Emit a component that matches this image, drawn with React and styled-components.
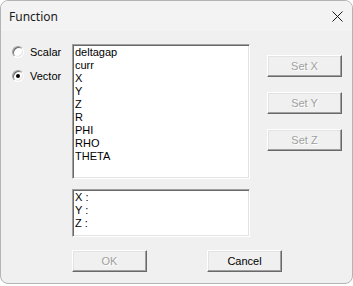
import React from 'react';
import styled, { createGlobalStyle } from 'styled-components';

const GlobalStyle = createGlobalStyle`
  * { box-sizing: border-box; }
  html, body {
    margin: 0;
    padding: 0;
    background: #ffffff;
  }
`;

const Window = styled.div`
  width: 353px;
  height: 284px;
  display: flex;
  flex-direction: column;
  border: 1px solid #b4b4b4;
  border-radius: 8px;
  overflow: hidden;
  background: #f0f0f0;
`;

const TitleBar = styled.div`
  height: 30px;
  flex: none;
  display: flex;
  align-items: center;
  justify-content: space-between;
  padding: 0 9px 0 8px;
  background: #f3f3f3;
  font-family: 'Noto Sans', 'Open Sans', sans-serif;
  font-size: 12px;
  color: #1a1a1a;
`;

const CloseButton = styled.div`
  width: 12px;
  height: 12px;
  display: flex;
  align-items: center;
  justify-content: center;
`;

const Body = styled.div`
  flex: 1;
  display: flex;
  flex-direction: column;
  padding: 13px 0 0 11px;
  font-family: 'Liberation Sans', Arial, sans-serif;
  font-size: 11px;
  color: #000;
`;

const TopSection = styled.div`
  display: flex;
`;

const RadioColumn = styled.div`
  width: 60px;
  display: flex;
  flex-direction: column;
  gap: 11px;
  padding-top: 1px;
`;

const RadioRow = styled.label`
  height: 13px;
  display: flex;
  align-items: center;
  gap: 6px;
`;

const RadioCircle = styled.span`
  width: 12px;
  height: 12px;
  border-radius: 50%;
  background: #fff;
  border: 1px solid;
  border-color: #a0a0a0 #ffffff #ffffff #a0a0a0;
  box-shadow: inset 1px 1px 0 #696969, inset -1px -1px 0 #e3e3e3;
  display: flex;
  align-items: center;
  justify-content: center;

  &::after {
    content: '';
    width: 4px;
    height: 4px;
    border-radius: 50%;
    background: ${(p) => (p.$checked ? '#000' : 'transparent')};
  }
`;

const CenterColumn = styled.div`
  width: 178px;
  display: flex;
  flex-direction: column;
  gap: 10px;
`;

const Sunken = styled.div`
  height: ${(p) => p.$height}px;
  background: #fff;
  border: 1px solid;
  border-color: #a0a0a0 #ffffff #ffffff #a0a0a0;
  box-shadow: inset 1px 1px 0 #696969, inset -1px -1px 0 #e3e3e3;
  padding: 1px 2px;
  line-height: 13px;
`;

const Line = styled.div`
  white-space: pre;
`;

const RightColumn = styled.div`
  margin-left: 17px;
  padding-top: 11px;
  display: flex;
  flex-direction: column;
  gap: 15px;
`;

const Button = styled.div`
  width: 75px;
  height: 22px;
  display: flex;
  align-items: center;
  justify-content: center;
  background: #f0f0f0;
  border: 1px solid;
  border-color: #ffffff #696969 #696969 #ffffff;
  box-shadow: inset -1px -1px 0 #a0a0a0, inset 1px 1px 0 #e3e3e3;
  color: ${(p) => (p.$disabled ? '#a0a0a0' : '#000')};
  text-shadow: ${(p) => (p.$disabled ? '1px 1px 0 #ffffff' : 'none')};
`;

const ButtonRow = styled.div`
  display: flex;
  gap: 60px;
  margin-top: 13px;
  padding-left: 60px;
`;

const listItems = ['deltagap', 'curr', 'X', 'Y', 'Z', 'R', 'PHI', 'RHO', 'THETA'];

export default function App() {
  return (
    <>
      <GlobalStyle />
      <Window>
        <TitleBar>
          <span>Function</span>
          <CloseButton>
            <svg width="11" height="11" viewBox="0 0 11 11">
              <path d="M0.5 0.5 L10.5 10.5 M10.5 0.5 L0.5 10.5" stroke="#1a1a1a" strokeWidth="1" />
            </svg>
          </CloseButton>
        </TitleBar>
        <Body>
          <TopSection>
            <RadioColumn>
              <RadioRow>
                <RadioCircle />
                Scalar
              </RadioRow>
              <RadioRow>
                <RadioCircle $checked />
                Vector
              </RadioRow>
            </RadioColumn>
            <CenterColumn>
              <Sunken $height={135}>
                {listItems.map((item) => (
                  <Line key={item}>{item}</Line>
                ))}
              </Sunken>
              <Sunken $height={48}>
                <Line>X :</Line>
                <Line>Y :</Line>
                <Line>Z :</Line>
              </Sunken>
            </CenterColumn>
            <RightColumn>
              <Button $disabled>Set X</Button>
              <Button $disabled>Set Y</Button>
              <Button $disabled>Set Z</Button>
            </RightColumn>
          </TopSection>
          <ButtonRow>
            <Button $disabled>OK</Button>
            <Button>Cancel</Button>
          </ButtonRow>
        </Body>
      </Window>
    </>
  );
}
